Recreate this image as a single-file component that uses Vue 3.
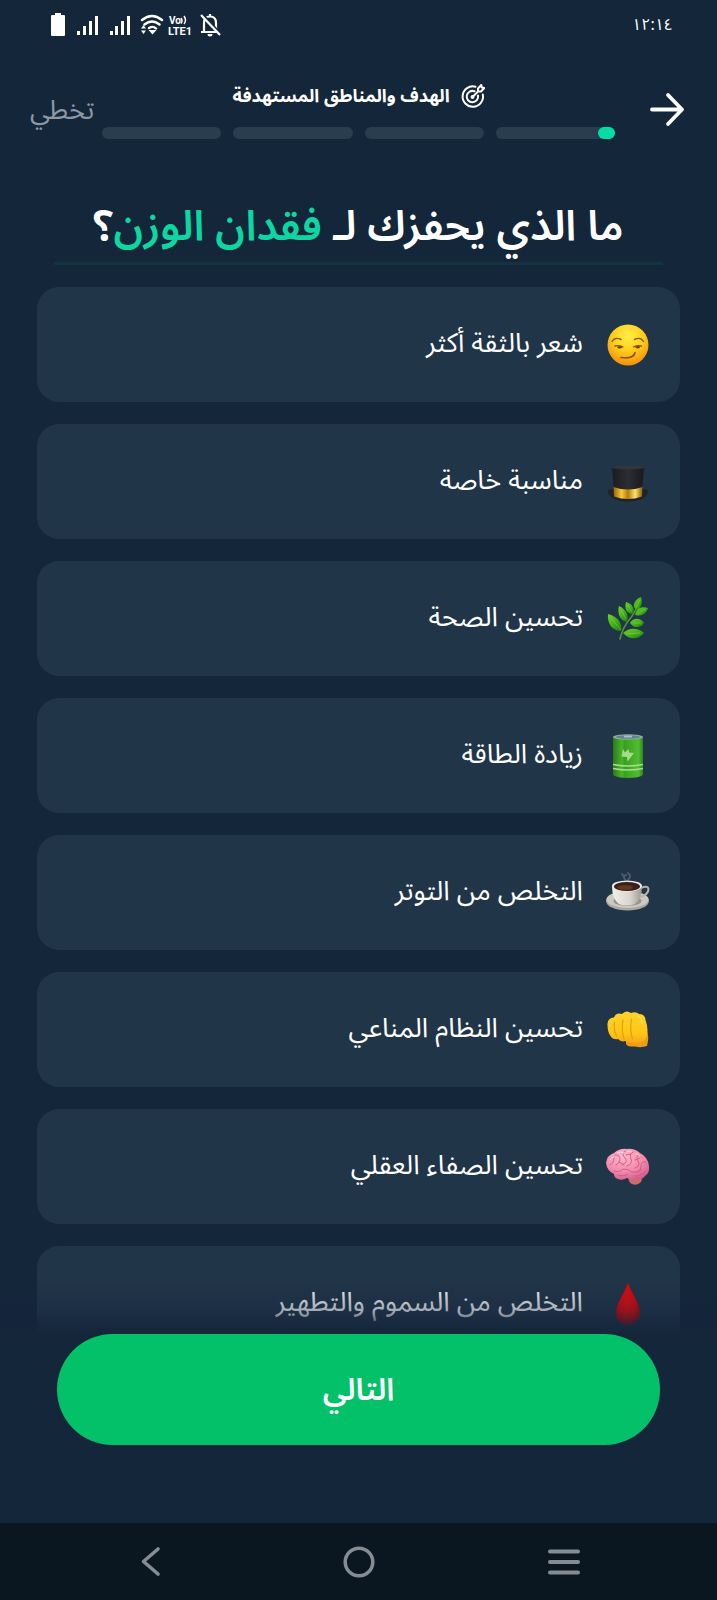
<script setup>
import { ref } from "vue"

const steps = [10, 0, 0, 0]

const options = [
  { id: "confidence", text: "شعر بالثقة أكثر" },
  { id: "occasion", text: "مناسبة خاصة" },
  { id: "health", text: "تحسين الصحة" },
  { id: "energy", text: "زيادة الطاقة" },
  { id: "stress", text: "التخلص من التوتر" },
  { id: "immunity", text: "تحسين النظام المناعي" },
  { id: "clarity", text: "تحسين الصفاء العقلي" },
  { id: "detox", text: "التخلص من السموم والتطهير" }
]

const selected = ref([])

function toggle(id){
  if (selected.value.includes(id)) {
    selected.value = selected.value.filter(x => x !== id)
  } else {
    selected.value.push(id)
  }
}
</script>

<template>
  <div class="screen" dir="rtl" lang="ar">

    <div class="status-bar">
      <span class="clock">١٢:١٤</span>
      <svg width="172" height="26" viewBox="0 0 172 26" fill="none">
        <path d="M5 1h6v2h3q1 0 1 1v19q0 1-1 1H2q-1 0-1-1V4q0-1 1-1h3z" fill="#fff"/>
        <g fill="#fff">
          <rect x="27" y="19" width="3" height="4"/><rect x="33" y="14" width="3" height="9"/>
          <rect x="39" y="9" width="3" height="14"/><rect x="45" y="4" width="3" height="19"/>
          <rect x="60" y="19" width="3" height="4"/><rect x="65" y="14" width="3" height="9"/>
          <rect x="71" y="9" width="3" height="14"/><rect x="77" y="4" width="3" height="19"/>
        </g>
        <g stroke="#fff" stroke-width="2.4" stroke-linecap="round">
          <path d="M92 8q10-8 20 0M94.500 12.500q7.500-6 15 0M99 16q4-2.500 7 .5"/>
        </g>
        <path d="M98.500 18h8l-4 4.500zM91 16.500l2.500-3.500 2.500 3.500zM91 18.500h5L93.500 22z" fill="#fff"/>
        <text x="119" y="12" font-family="Roboto, sans-serif" font-size="10" font-weight="700" fill="#fff" direction="ltr">Vo</text>
        <path d="M131 6q2 2.500 0 5.500M134 4q3 4.500 0 8" stroke="#fff" stroke-width="1.500"/>
        <text x="118" y="23" font-family="Roboto, sans-serif" font-size="11" font-weight="700" fill="#fff" direction="ltr">LTE1</text>
        <path d="M154 20V11q0-6.500 6-6.500T166 11v9M151 20h18M160 2v2" stroke="#fff" stroke-width="2.200"/>
        <path d="M157.500 22h5q0 2.500-2.500 2.500t-2.500-2.500" fill="#fff"/>
        <path d="M152 2l19 21" stroke="#14263a" stroke-width="3"/>
        <path d="M151 3l19 20" stroke="#fff" stroke-width="2.200"/>
      </svg>
    </div>

    <header class="header">
      <button class="icon-btn" aria-label="رجوع">
        <svg width="36" height="36" viewBox="0 0 36 36" fill="none" stroke="#fff" stroke-width="3.800" stroke-linecap="round" stroke-linejoin="round">
          <path d="M3 17.500h30M19 3l14 14.500-14 14.500"/>
        </svg>
      </button>

      <div class="progress">
        <div class="section-name">
          <svg width="24" height="24" viewBox="0 0 24 24" fill="none" stroke="#fff" stroke-width="2" stroke-linecap="round" stroke-linejoin="round">
            <path d="M14.500 2.700A10.200 10.200 0 1 0 21.800 10.500"/>
            <path d="M13.500 7.300A5.700 5.700 0 1 0 17 11.500"/>
            <path d="M11.500 13l6-6M17 7.500V4.500L20.300 1l.5 2.500 2.500.5L20 7.500z"/>
            <circle cx="11.500" cy="13" r="1"/>
          </svg>
          <span>الهدف والمناطق المستهدفة</span>
        </div>
        <div class="bars">
          <div v-for="(step, i) in steps" :key="i" class="bar">
            <div v-if="step" class="bar-fill"></div>
          </div>
        </div>
      </div>

      <button class="skip">تخطي</button>
    </header>

    <h1 class="title">ما الذي يحفزك لـ <span>فقدان الوزن</span>؟</h1>

    <div class="list-area">
      <div class="list">
        <button
          v-for="item in options"
          :key="item.id"
          class="option"
          :class="{ active: selected.includes(item.id) }"
          :aria-pressed="selected.includes(item.id)"
          @click="toggle(item.id)"
        >
          <svg class="emoji" width="44" height="44" viewBox="0 0 44 44" fill="none">

            <g v-if="item.id === 'confidence'">
              <radialGradient id="face" cx=".5" cy=".28" r=".75">
                <stop offset="0" stop-color="#fff04a"/><stop offset=".5" stop-color="#ffcd1a"/><stop offset="1" stop-color="#f08a0c"/>
              </radialGradient>
              <circle cx="22" cy="22" r="20.500" fill="url(#face)"/>
              <g stroke="#8a560c" stroke-linecap="round">
                <path d="M6 18.500q3-5 9-2M28.500 16.500q6-3 9 2" stroke-width="1.400"/>
                <path d="M9 23q4-1 8 1M27.500 24q4-2 8-1" stroke-width="1.300"/>
                <path d="M15 34.500q8 1 11-1 2.500-1 3-4" stroke-width="1.700"/>
              </g>
              <path d="M11.500 23.500q3-.5 5 .5-2 2.500-5 1zM29 24q3-1.500 5-.5 0 2.500-3 2z" fill="#6a400a"/>
            </g>

            <g v-else-if="item.id === 'occasion'">
              <linearGradient id="gold">
                <stop offset="0" stop-color="#93650a"/><stop offset=".28" stop-color="#f5ca3c"/><stop offset=".5" stop-color="#b37c10"/>
                <stop offset=".75" stop-color="#ffe36a"/><stop offset="1" stop-color="#8a5c08"/>
              </linearGradient>
              <linearGradient id="felt">
                <stop offset="0" stop-color="#191b20"/><stop offset=".5" stop-color="#2d2e34"/><stop offset="1" stop-color="#17191e"/>
              </linearGradient>
              <path d="M2 30q20-6 40 0 0 6-6 9-14 5-28 0-6-3-6-9z" fill="#1f2227"/>
              <path d="M6 7h32l-2 24q-14 5-28 0z" fill="url(#felt)"/>
              <ellipse cx="22" cy="7.500" rx="16" ry="1.800" fill="#34363b"/>
              <path d="M7.500 27q14.500 5 29 0l-.5 9.500q-14 5-28 0z" fill="url(#gold)"/>
            </g>

            <g v-else-if="item.id === 'health'">
              <linearGradient id="leaf" x1="0" y1="0" x2="1" y2="1">
                <stop offset="0" stop-color="#6fd52a"/><stop offset=".55" stop-color="#41ad19"/><stop offset="1" stop-color="#1c780d"/>
              </linearGradient>
              <path d="M14 42Q17 30 23 23T32 7" stroke="#55923c" stroke-width="1.600" stroke-linecap="round"/>
              <g fill="url(#leaf)">
                <path d="M35 0C37 6 35 11 31 13 26 11 27 3 35 0z"/>
                <path d="M20 5C27 7 29 12 27 17 21 17 18 12 20 5z"/>
                <path d="M42 11C40 17 35 20 29 18 30 11 36 9 42 11z"/>
                <path d="M13 9C21 13 23 19 21 25 14 24 11 16 13 9z"/>
                <path d="M38 26C34 20 27 21 24 26 28 32 35 31 38 26z"/>
                <path d="M2 17C11 19 17 26 15 34 6 34 1 26 2 17z"/>
                <path d="M38 36C31 30 23 31 17 36 23 43 32 43 38 36z"/>
              </g>
              <path d="M5 21l10 12M20 37l14-1M15 13l5 9M28 26h7M22 8l4 7M34 3l-4 8M32 17l7-5" stroke="#a5ef6b" stroke-width=".6" opacity=".6"/>
            </g>

            <g v-else-if="item.id === 'energy'">
              <linearGradient id="cell">
                <stop offset="0" stop-color="#2b7c17"/><stop offset=".3" stop-color="#48b528"/><stop offset=".38" stop-color="#3aa01f"/>
                <stop offset=".85" stop-color="#50bd30"/><stop offset="1" stop-color="#2e8318"/>
              </linearGradient>
              <path d="M7 3h30v38q-4 3-15 3T7 41z" fill="url(#cell)"/>
              <ellipse cx="22" cy="3" rx="15" ry="2.800" fill="#8faaa6"/>
              <ellipse cx="22" cy="3" rx="12" ry="1.700" fill="#5f8784"/>
              <path d="M18 1.500h8v2h-8z" fill="#a5c0bd"/>
              <path d="M7 30.500q15 3 30 0M7 34.500q15 3 30 0" stroke="#a4dd85" stroke-width="1.300"/>
              <path d="M17 15l-1.500 7.500 5.500.5.500 4.500 6.500-8.500-5-.5-.5-3.500-3.500 3.500z" fill="#a5dc8c"/>
            </g>

            <g v-else-if="item.id === 'stress'">
              <linearGradient id="china" x1="0" x2="1">
                <stop offset="0" stop-color="#f1efe9"/><stop offset=".6" stop-color="#d8d6cf"/><stop offset="1" stop-color="#9b9992"/>
              </linearGradient>
              <ellipse cx="21.500" cy="30" rx="21.500" ry="9.500" fill="#a9a7a0"/>
              <ellipse cx="21.500" cy="28.500" rx="21" ry="8.500" fill="#cbc9c2"/>
              <ellipse cx="21.500" cy="30" rx="14" ry="5" fill="#96948c"/>
              <path d="M35 17q7-3 7.500 1 0 6-9 8" stroke="#b5b5b0" stroke-width="2"/>
              <path d="M6 15q0 13 7 18 8 3 16 0 7-5 7-18z" fill="url(#china)"/>
              <ellipse cx="21" cy="15" rx="15" ry="5.500" fill="#eeece5"/>
              <ellipse cx="21" cy="15.500" rx="13" ry="4.500" fill="#3b2115"/>
              <ellipse cx="19" cy="16.500" rx="8" ry="2.300" fill="#603822"/>
              <path d="M20 10q-4-5 0-6M22 9q4-4 0-7M18 6l-2-3" stroke="#97a5ae" stroke-width="2" stroke-linecap="round" opacity=".35"/>
            </g>

            <g v-else-if="item.id === 'immunity'">
              <linearGradient id="hand" x1="0" y1="0" x2="0" y2="1">
                <stop offset="0" stop-color="#ffd52b"/><stop offset=".7" stop-color="#ffc416"/><stop offset="1" stop-color="#f5a912"/>
              </linearGradient>
              <path d="M20 29l20-8q3 6 2 12l-1 5q-6 2-12 .5-8 .5-9-2.500z" fill="#f09a16"/>
              <path d="M1.500 17Q1 10 8 9.500 10 4 16 6q4-4.500 9-1 5-2 8 1 6 0 6.500 6 3 8 1.500 15-1 6-5 6.500-5 3-9 .5-4 2-8-1-4 1.500-7-2-5 1-7.500-3Q1.500 24 1.500 17z" fill="url(#hand)"/>
              <path d="M8.500 14q-1 8 2 14M17 12q-2 9 1 19M25.500 11q-2 10 1 20" stroke="#e39f0f" stroke-width="1.200" stroke-linecap="round"/>
              <path d="M31 8q5 1 5 8" stroke="#ffe35c" stroke-width="1.200"/>
            </g>

            <g v-else-if="item.id === 'clarity'">
              <radialGradient id="brain" cx=".4" cy=".25" r=".8">
                <stop offset="0" stop-color="#ffb8cd"/><stop offset=".6" stop-color="#f389ab"/><stop offset="1" stop-color="#d0608a"/>
              </radialGradient>
              <path d="M22 32l12-1q3 2 1 6-4 4-9 2-3-1-4-7z" fill="#d2696c"/>
              <path d="M0 18Q1 10 8 8 14 3 21 4q7-1 13 4 8 4 9 13 1 7-4 10-3 4-8 3-5 2-10-1-5 3-9 1-4-1-4-5Q1 26 0 18z" fill="url(#brain)"/>
              <g stroke="#cc5a85" stroke-width=".9" stroke-linecap="round">
                <path d="M4 20q4-2 4-7M8 26q5 2 9-2 6 0 9 3 5 1 9-2M9 10q5-1 5 5-1 4-4 5M19 6q-4 3 0 7t-3 7M27 7q-4 2-2 7t-4 7M34 9q-5 2-2 7t-3 7M40 17q-5-1-5 4t-3 6M12 30q6 2 10-1M28 31q5 1 11-4M20 10l5-1M29 15l5-2M13 17l5 3"/>
              </g>
              <path d="M11 8q4-2 7 0M21 6.500q3-1 5 .5M30 9q3-1 4 2M4 15q1-3 4-3" stroke="#ffdce6"/>
            </g>

            <g v-else>
              <radialGradient id="drop" cx=".45" cy=".45" r=".6">
                <stop offset="0" stop-color="#f20c0c"/><stop offset=".6" stop-color="#e60507"/><stop offset="1" stop-color="#b00306"/>
              </radialGradient>
              <path d="M22 0C24 10 34 20 34 31 34 38 29 43 22 43S10 38 10 31C10 20 20 10 22 0z" fill="url(#drop)"/>
            </g>
          </svg>
          <span>{{ item.text }}</span>
        </button>
      </div>
    </div>

    <div class="footer">
      <button class="next">التالي</button>
    </div>

    <nav class="nav-bar">
      <button class="icon-btn" aria-label="القائمة">
        <svg width="34" height="34" viewBox="0 0 34 34" stroke="#858d94" stroke-width="4" stroke-linecap="round">
          <path d="M3 6.500h28M3 17h28M3 27.500h28"/>
        </svg>
      </button>
      <button class="icon-btn" aria-label="الرئيسية">
        <svg width="34" height="34" viewBox="0 0 34 34" fill="none" stroke="#858d94" stroke-width="3.500">
          <circle cx="17" cy="17" r="13.800"/>
        </svg>
      </button>
      <button class="icon-btn" aria-label="السابق">
        <svg width="34" height="34" viewBox="0 0 34 34" fill="none" stroke="#858d94" stroke-width="3.600" stroke-linecap="round" stroke-linejoin="round">
          <path d="M22 4L7.500 16.500 22 29"/>
        </svg>
      </button>
    </nav>

  </div>
</template>

<style>
body{
  background: #14263a;
}
</style>

<style scoped>

.screen{
  height: 100vh;
  display: flex;
  flex-direction: column;
  background: #14263a;
  color: #fff;
  font-family: "Noto Sans Arabic", "Noto Sans", "DejaVu Sans", sans-serif;
}

button{
  font-family: inherit;
  color: inherit;
  border: none;
  cursor: pointer;
}

.status-bar{
  display: flex;
  justify-content: space-between;
  align-items: center;
  height: 50px;
  padding: 0 44px 0 50px;
  box-sizing: border-box;
}

.clock{
  font-size: 16px;
}


.header{
  display: flex;
  justify-content: space-between;
  height: 120px;
  padding: 32px 32px 0 30px;
  box-sizing: border-box;
}

.icon-btn{
  background: none;
  padding: 0;
  display: flex;
}

.header .icon-btn{
  width: 70px;
  height: 56px;
  align-items: center;
}

.progress{
  flex: 1;
}

.section-name{
  display: flex;
  justify-content: center;
  align-items: center;
  gap: 11px;
  height: 28px;
  font-size: 18px;
  font-weight: 700;
  white-space: nowrap;
}

.bars{
  display: flex;
  gap: 12px;
  margin-top: 17px;
}

.bar{
  flex: 1;
  height: 12px;
  border-radius: 6px;
  background: #2a3d4e;
}

.bar-fill{
  width: 17px;
  height: 12px;
  border-radius: 6px;
  background: #05dba5;
}

.skip{
  width: 72px;
  height: 42px;
  padding: 0;
  background: none;
  color: #8d98a4;
  font-size: 27px;
  text-align: left;
}


.title{
  margin: 0 54px;
  padding-top: 22px;
  height: 95px;
  box-sizing: border-box;
  border-bottom: 3px solid #12343f;
  text-align: center;
  font-size: 42px;
  line-height: 70px;
  font-weight: 600;
  white-space: nowrap;
}

.title span{
  color: #0cd6a2;
}


.list-area{
  position: relative;
  flex: 1;
  min-height: 0;
}

/* desvanecido sobre el final de la lista */
.list-area::after{
  content: "";
  position: absolute;
  left: 0;
  right: 0;
  bottom: 0;
  height: 56px;
  background: linear-gradient(rgba(20,37,60,0), rgba(20,37,60,0.4) 60%, #14253c);
  pointer-events: none;
}

.list{
  height: 100%;
  padding: 22px 37px 0;
  box-sizing: border-box;
  overflow-y: auto;
  display: flex;
  flex-direction: column;
  gap: 22px;
  scrollbar-width: none;
}

.option{
  flex: none;
  display: flex;
  align-items: center;
  gap: 23px;
  height: 115px;
  padding: 0 30px;
  border-radius: 22px;
  background: #213549;
  font-size: 27px;
  text-align: right;
}

.option span{
  padding-bottom: 2px;
}

.option.active{
  background: #1f4a50;
}

.emoji{
  flex: none;
}


.footer{
  padding: 0 57px 78px;
}

.next{
  width: 100%;
  height: 111px;
  border-radius: 56px;
  background: #03c169;
  font-size: 31px;
  font-weight: 600;
}


.nav-bar{
  display: flex;
  justify-content: space-between;
  align-items: center;
  height: 77px;
  padding: 0 136px;
  background: #0a1620;
}
</style>
